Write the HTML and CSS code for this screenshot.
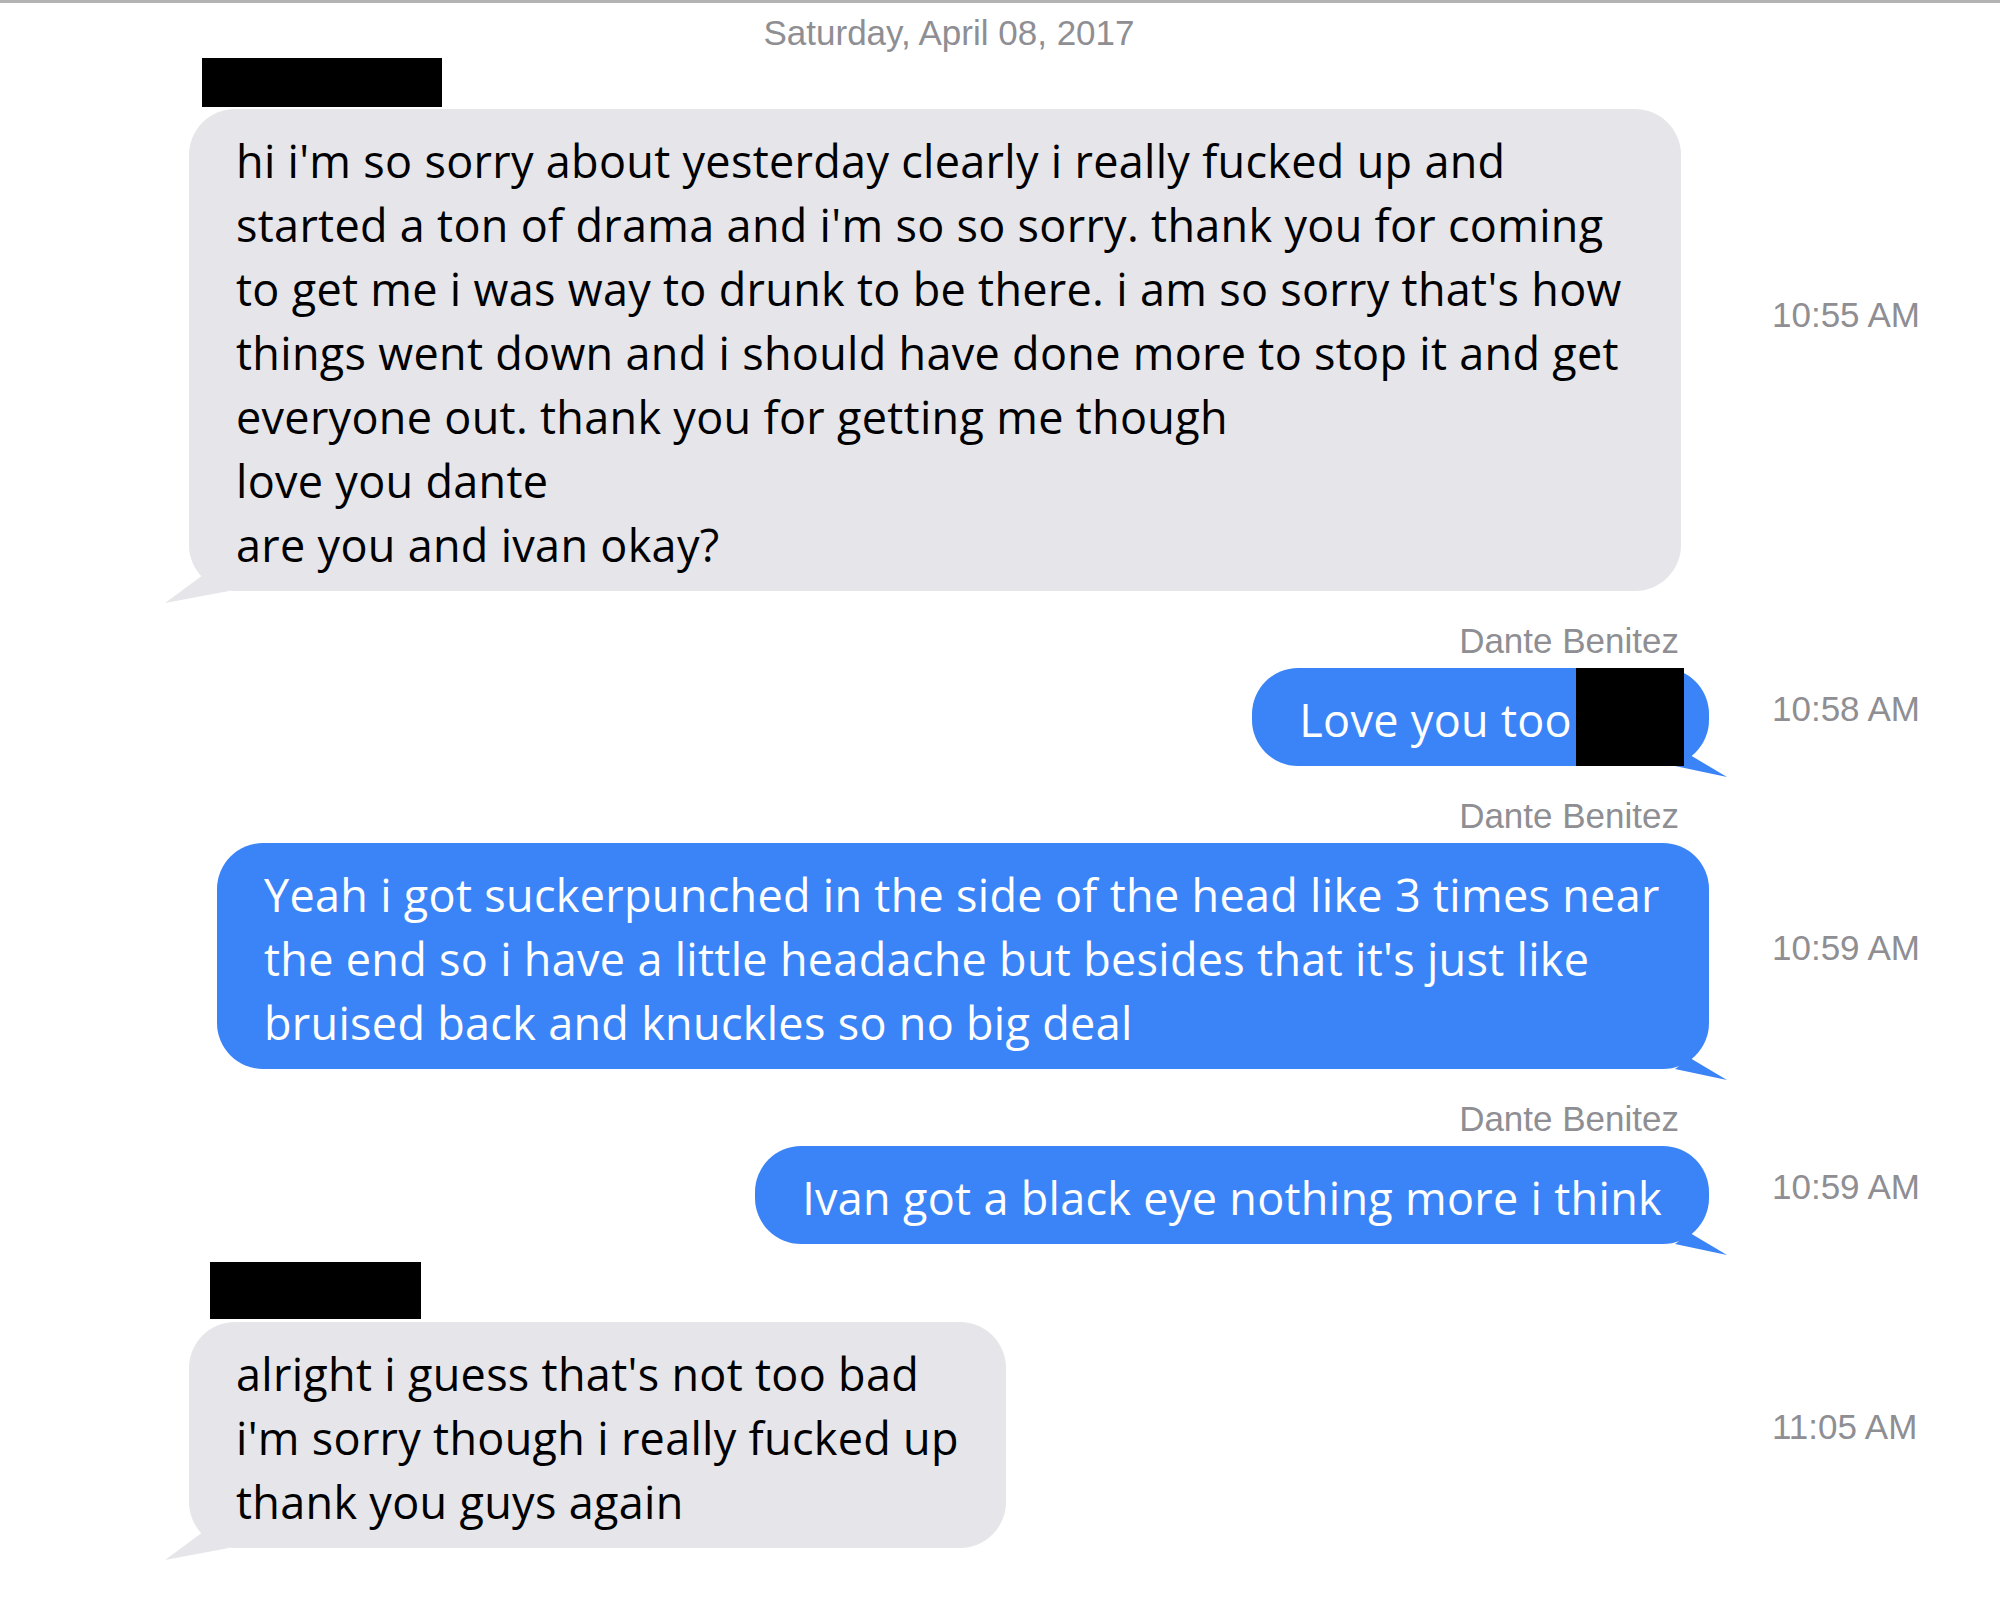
FILE: index.html
```html
<!DOCTYPE html>
<html lang="en">
<head>
  <meta charset="UTF-8">
  <title>Messages</title>
  <link rel="stylesheet" href="styles.css">
</head>
<body>
  <div class="screen">
    <div class="date">Saturday, April 08, 2017</div>

    <div class="msg msg--in msg--first">
      <div class="sender redacted redacted--one"></div>
      <div class="bubble">hi i'm so sorry about yesterday clearly i really fucked up and started a ton of drama and i'm so so sorry. thank you for coming to get me i was way to drunk to be there. i am so sorry that's how things went down and i should have done more to stop it and get everyone out. thank you for getting me though
love you dante
are you and ivan okay?</div>
      <div class="time time--high">10:55 AM</div>
    </div>

    <div class="msg msg--out">
      <div class="sender">Dante Benitez</div>
      <div class="bubble bubble--hidden-end">Love you too<span class="redact-over"></span></div>
      <div class="time">10:58 AM</div>
    </div>

    <div class="msg msg--out">
      <div class="sender">Dante Benitez</div>
      <div class="bubble">Yeah i got suckerpunched in the side of the head like 3 times near the end so i have a little headache but besides that it's just like bruised back and knuckles so no big deal</div>
      <div class="time">10:59 AM</div>
    </div>

    <div class="msg msg--out">
      <div class="sender">Dante Benitez</div>
      <div class="bubble">Ivan got a black eye nothing more i think</div>
      <div class="time">10:59 AM</div>
    </div>

    <div class="msg msg--in msg--close">
      <div class="sender redacted redacted--two"></div>
      <div class="bubble">alright i guess that's not too bad
i'm sorry though i really fucked up
thank you guys again</div>
      <div class="time">11:05 AM</div>
    </div>
  </div>
</body>
</html>
```

FILE: styles.css
```css
:root {
  --gray-bubble: #e5e5ea;
  --blue-bubble: #3a84f7;
  --meta: #8e8e93;
  --radius: 46px;
}
body {
  margin: 0;
  background: #fff;
}
.screen {
  border-top: 3px solid #b3b3b3;
  padding-left: 189px;
  min-height: 1600px;
  font-family: 'Liberation Sans', Arial, sans-serif;
}
.date {
  width: 1520px;
  margin-top: 10px;
  text-align: center;
  font-size: 35px;
  line-height: 40px;
  color: var(--meta);
}
.msg {
  display: grid;
  grid-template-columns: 1520px auto;
  column-gap: 63px;
  margin-top: 30px;
}
.msg--first { margin-top: 5px; }
.msg--close { margin-top: 18px; }
.sender {
  grid-column: 1;
  grid-row: 1;
  text-align: right;
  padding-right: 30px;
  margin-bottom: 7px;
  font-size: 35px;
  line-height: 40px;
  color: var(--meta);
}
.redacted {
  background: #000;
  padding: 0;
  justify-self: start;
}
.redacted--one {
  width: 240px;
  height: 49px;
  margin-left: 13px;
  margin-bottom: 2px;
}
.redacted--two {
  width: 211px;
  height: 57px;
  margin-left: 21px;
  margin-bottom: 3px;
}
.bubble {
  grid-column: 1;
  grid-row: 2;
  position: relative;
  max-width: 1492px;
  box-sizing: border-box;
  padding: 20px 47px 14px;
  border-radius: var(--radius);
  font-family: 'Open Sans', 'Noto Sans', sans-serif;
  font-size: 45px;
  letter-spacing: 0.3px;
  line-height: 64px;
  white-space: pre-line;
}
.bubble::after {
  content: "";
  position: absolute;
}
.msg--in .bubble {
  justify-self: start;
  background: var(--gray-bubble);
  color: #000;
}
.msg--in .bubble::after {
  left: -24px;
  bottom: -12px;
  width: 64px;
  height: 28px;
  background: var(--gray-bubble);
  clip-path: polygon(38px 0, 64px 16px, 0 28px);
}
.msg--out .bubble {
  justify-self: end;
  background: var(--blue-bubble);
  color: #fff;
}
.msg--out .bubble::after {
  right: -18px;
  bottom: -11px;
  width: 52px;
  height: 22px;
  background: var(--blue-bubble);
  clip-path: polygon(15px 0, 52px 22px, 0 11px);
}
.bubble--hidden-end {
  padding-right: 137px;
}
.redact-over {
  position: absolute;
  top: 0;
  bottom: 0;
  right: 25px;
  width: 108px;
  background: #000;
  z-index: 1;
}
.time {
  grid-column: 2;
  grid-row: 2;
  align-self: center;
  margin-bottom: 16px;
  font-size: 35px;
  line-height: 40px;
  color: var(--meta);
  white-space: nowrap;
}
.time--high { margin-bottom: 70px; }
```
